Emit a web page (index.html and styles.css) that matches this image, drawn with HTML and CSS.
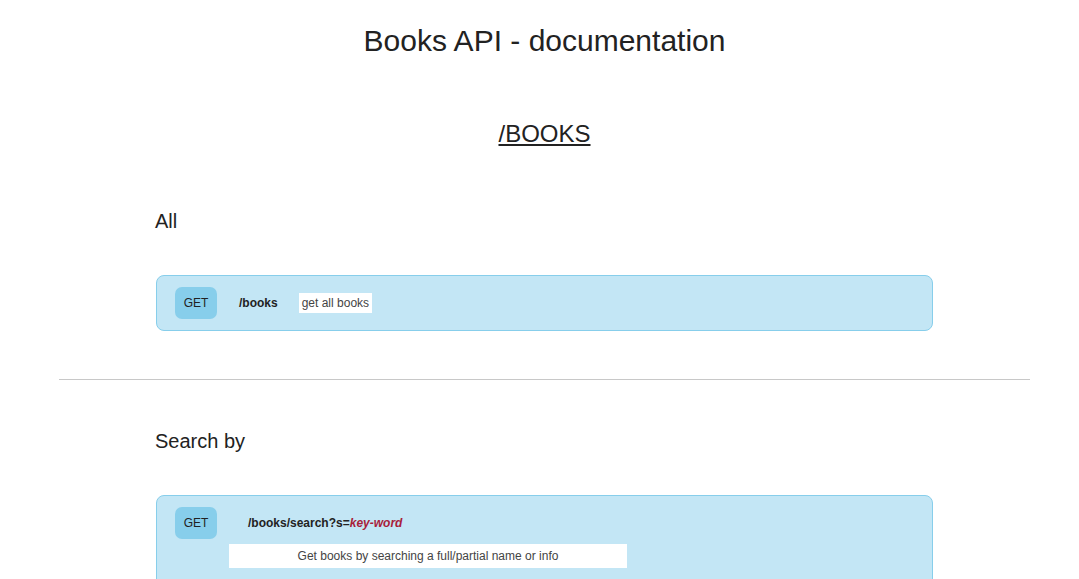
FILE: index.html
```html
<!DOCTYPE html>
<html>
<head>
<meta charset="utf-8">
<link rel="stylesheet" href="styles.css">
</head>
<body>
<div class="page">
  <h1 class="title">Books API - documentation</h1>
  <h2 class="section-title">/BOOKS</h2>

  <section class="group">
    <h3 class="group-title">All</h3>
    <div class="endpoint">
      <div class="endpoint-row">
        <span class="method">GET</span>
        <span class="path">/books</span>
        <span class="desc-inline">get all books</span>
      </div>
    </div>
  </section>

  <hr class="divider">

  <section class="group group-second">
    <h3 class="group-title">Search by</h3>
    <div class="endpoint endpoint-tall">
      <div class="endpoint-row">
        <span class="method">GET</span>
        <span class="path path-wide">/books/search?s=<em class="param">key-word</em></span>
      </div>
      <div class="desc-block">Get books by searching a full/partial name or info</div>
    </div>
  </section>
</div>
</body>
</html>
```

FILE: styles.css
```css
html, body {
  margin: 0;
  padding: 0;
  background: #ffffff;
}

body {
  font-family: "Liberation Sans", Arial, sans-serif;
  color: #222;
  overflow: hidden;
}

.page {
  padding-left: 10px;
  display: flex;
  flex-direction: column;
}

.title {
  margin: 23px 0 0 0;
  font-size: 30px;
  font-weight: normal;
  text-align: center;
  line-height: 36px;
}

.section-title {
  margin: 61px 0 0 0;
  font-size: 24px;
  font-weight: normal;
  text-align: center;
  text-decoration: underline;
  line-height: 28px;
}

.group {
  width: 777px;
  margin: 0 auto;
  display: flex;
  flex-direction: column;
}

.group-title {
  margin: 61px 0 0 -1px;
  font-size: 20px;
  font-weight: normal;
  line-height: 24px;
}

.group-second .group-title {
  margin-top: 49px;
}

.endpoint {
  margin-top: 42px;
  background: #c3e6f5;
  border: 1px solid #87ceeb;
  border-radius: 8px;
  padding: 11px 18px;
  display: flex;
  flex-direction: column;
}

.endpoint-tall {
  margin-top: 42px;
  padding-bottom: 40px;
}

.endpoint-row {
  display: flex;
  align-items: center;
  height: 32px;
}

.method {
  width: 42px;
  height: 32px;
  background: #87ceeb;
  border-radius: 7px;
  display: flex;
  align-items: center;
  justify-content: center;
  font-size: 12px;
  color: #222;
}

.path {
  margin-left: 22px;
  font-size: 12px;
  font-weight: bold;
  color: #222;
}

.path-wide {
  margin-left: 31px;
}

.param {
  color: #a8203a;
  font-style: italic;
}

.desc-inline {
  margin-left: 21px;
  background: #fff;
  font-size: 12px;
  color: #444;
  padding: 3px 3px;
  line-height: 14px;
}

.desc-block {
  margin: 5px 0 0 54px;
  width: 398px;
  background: #fff;
  font-size: 12px;
  color: #444;
  text-align: center;
  line-height: 24px;
}

.divider {
  margin: 48px 49px 0 49px;
  border: none;
  border-top: 1px solid #c8c8c8;
  height: 0;
}
```
